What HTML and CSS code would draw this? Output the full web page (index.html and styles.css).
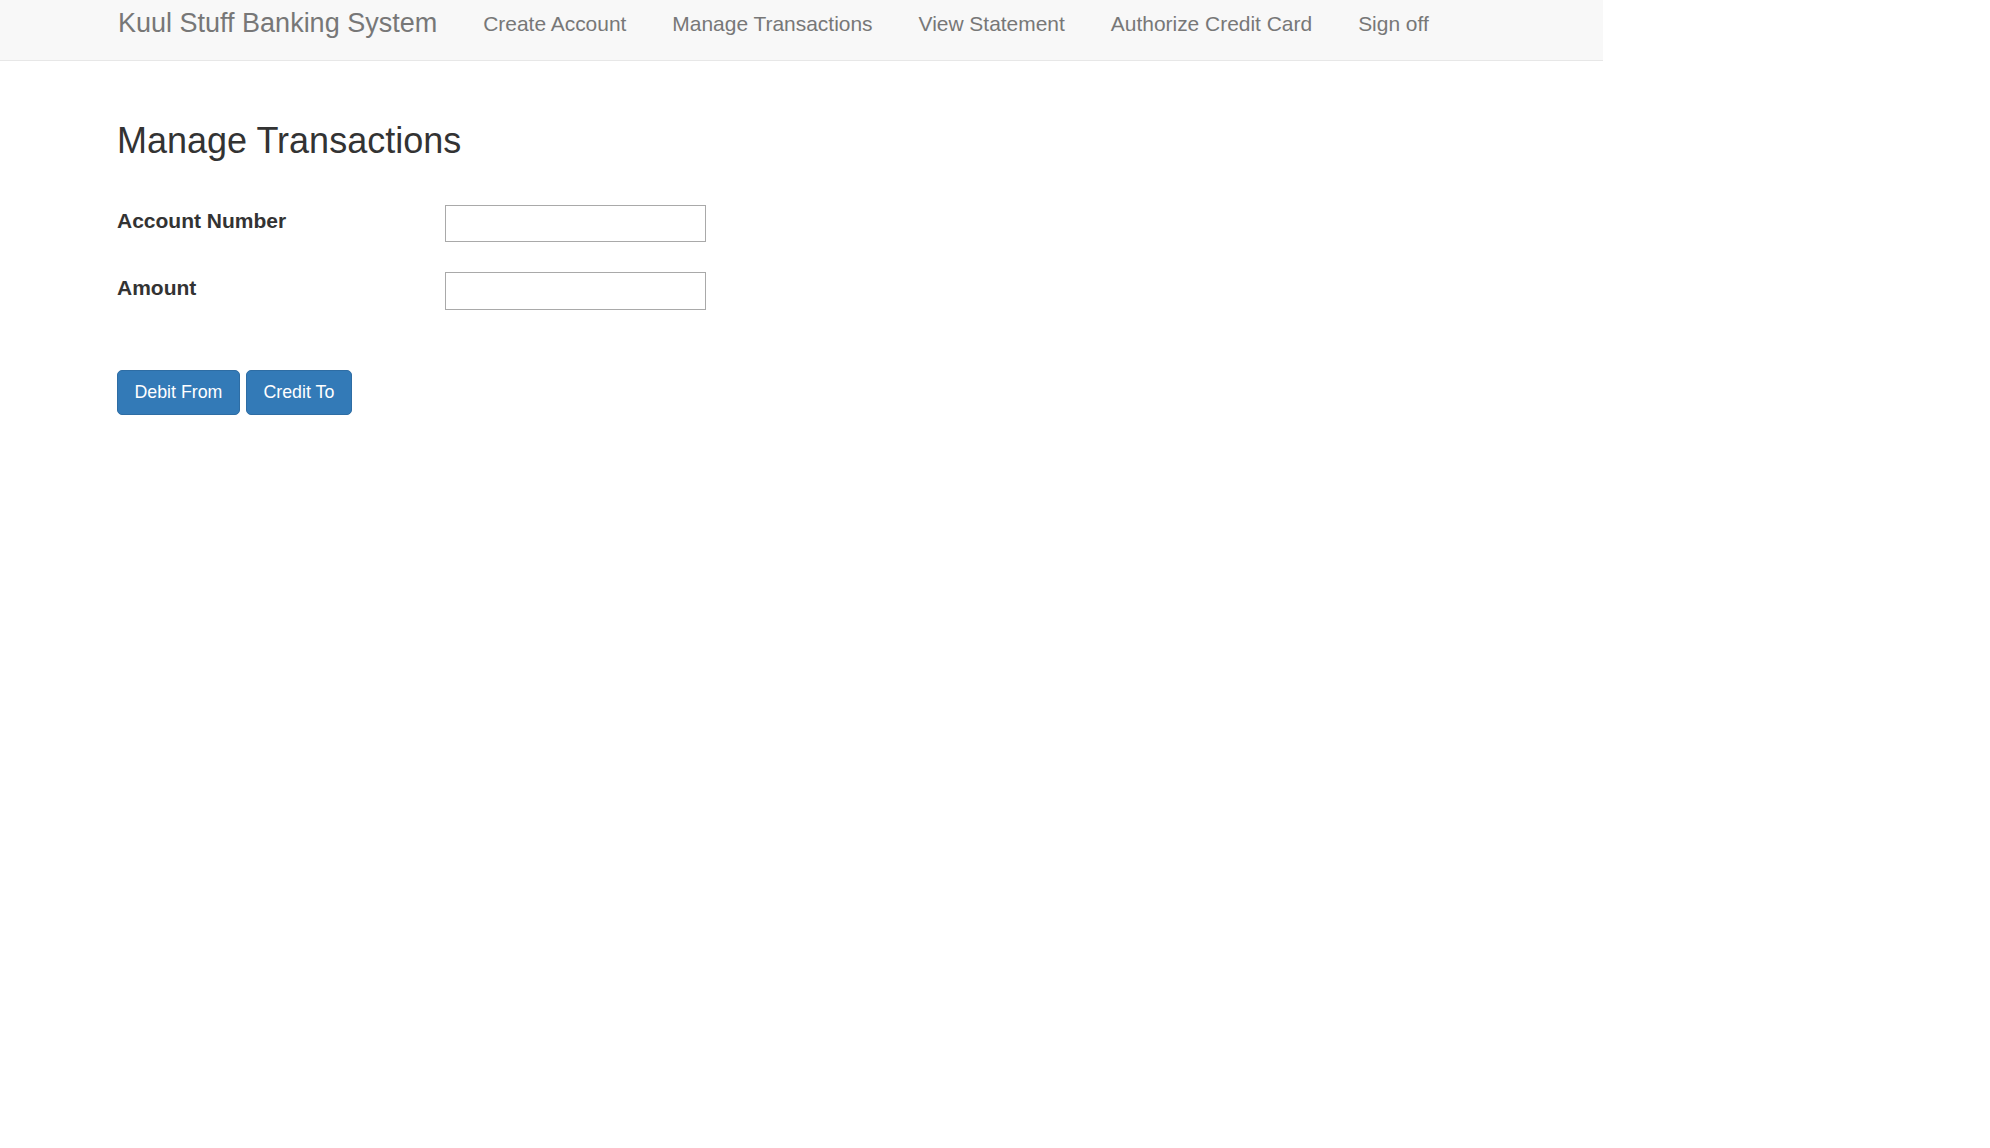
FILE: index.html
```html
<!DOCTYPE html>
<html lang="en">
<head>
<meta charset="utf-8">
<title>Manage Transactions</title>
<link rel="stylesheet" href="styles.css">
</head>
<body>
<nav class="navbar">
  <a class="brand" href="#">Kuul Stuff Banking System</a>
  <ul class="nav">
    <li><a href="#">Create Account</a></li>
    <li><a href="#">Manage Transactions</a></li>
    <li><a href="#">View Statement</a></li>
    <li><a href="#">Authorize Credit Card</a></li>
    <li><a href="#">Sign off</a></li>
  </ul>
</nav>
<main class="content">
  <h2 class="title">Manage Transactions</h2>
  <form class="form">
    <div class="row">
      <label class="label" for="acct">Account Number</label>
      <input class="input" id="acct" type="text">
    </div>
    <div class="row">
      <label class="label" for="amt">Amount</label>
      <input class="input" id="amt" type="text">
    </div>
    <div class="actions">
      <button type="button" class="btn">Debit From</button>
      <button type="button" class="btn">Credit To</button>
    </div>
  </form>
</main>
</body>
</html>
```
FILE: styles.css
```css
html, body {
  margin: 0;
  padding: 0;
  background: #ffffff;
  font-family: "Liberation Sans", Arial, sans-serif;
  color: #333333;
}

.navbar {
  width: 1603px;
  height: 61px;
  box-sizing: border-box;
  background: #f8f8f8;
  border-bottom: 1px solid #e7e7e7;
  display: flex;
  align-items: flex-start;
  padding-left: 118px;
}

.brand {
  font-size: 27px;
  line-height: 30px;
  padding-top: 8px;
  color: #777777;
  text-decoration: none;
  margin-right: 23px;
}

.nav {
  list-style: none;
  margin: 0;
  padding: 0;
  display: flex;
}

.nav a {
  display: block;
  font-size: 20.95px;
  line-height: 24px;
  padding: 12px 23px 0;
  color: #777777;
  text-decoration: none;
}

.content {
  padding-left: 117px;
}

.title {
  margin: 59px 0 0;
  font-size: 36px;
  font-weight: normal;
  line-height: 42px;
  color: #333333;
}

.form {
  margin-top: 43px;
}

.row {
  display: flex;
  align-items: flex-start;
  height: 67px;
}

.label {
  width: 328px;
  font-size: 21px;
  font-weight: bold;
  line-height: 24px;
  padding-top: 4px;
  color: #333333;
}

.input {
  width: 261px;
  height: 37px;
  box-sizing: border-box;
  border: 1px solid #a9a9a9;
  border-radius: 0;
  margin: 0;
  padding: 0 6px;
  font-family: inherit;
  font-size: 18px;
}

.row:nth-of-type(2) .input {
  height: 38px;
}

.actions {
  display: flex;
  gap: 6px;
  margin-top: 31px;
}

.btn {
  height: 45px;
  padding: 0 16.5px;
  background: #337ab7;
  border: 1px solid #2e6da4;
  border-radius: 5px;
  color: #ffffff;
  font-family: "Liberation Sans", Arial, sans-serif;
  font-size: 17.8px;
  font-weight: normal;
  cursor: pointer;
}
```
